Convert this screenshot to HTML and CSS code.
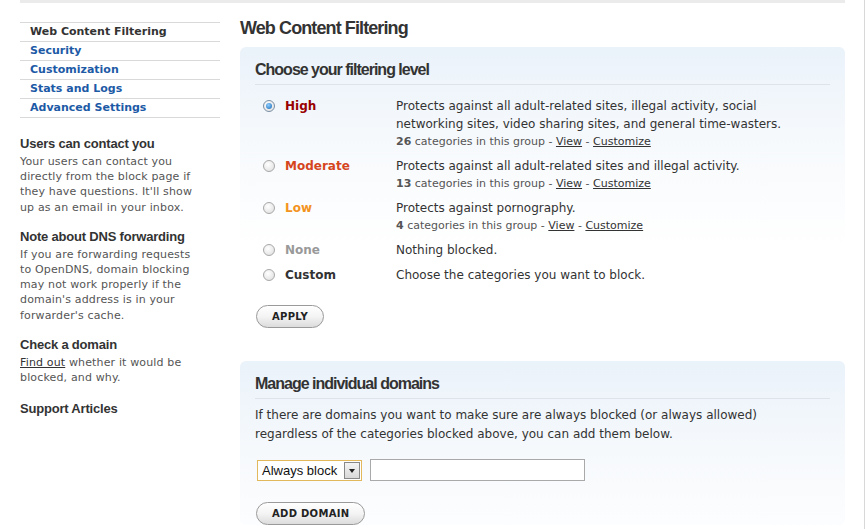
FILE: index.html
```html
<!DOCTYPE html>
<html lang="en">
  <head>
    <meta charset="UTF-8" />
    <title>Web Content Filtering</title>
    <link rel="stylesheet" href="styles.css">
  </head>
  <body>
    <div class="page">
      <div class="top-bar"></div>
      <div class="layout">
        <aside class="sidebar">
          <ul class="side-nav">
            <li class="current">Web Content Filtering</li>
            <li><a href="#">Security</a></li>
            <li><a href="#">Customization</a></li>
            <li><a href="#">Stats and Logs</a></li>
            <li><a href="#">Advanced Settings</a></li>
          </ul>

          <div class="side-block">
            <h3>Users can contact you</h3>
            <p>Your users can contact you directly from the block page if they have questions. It'll show up as an email in your inbox.</p>
          </div>
          <div class="side-block">
            <h3>Note about DNS forwarding</h3>
            <p>If you are forwarding requests to OpenDNS, domain blocking may not work properly if the domain's address is in your forwarder's cache.</p>
          </div>
          <div class="side-block">
            <h3>Check a domain</h3>
            <p><a href="#">Find out</a> whether it would be blocked, and why.</p>
          </div>
          <div class="side-block">
            <h3>Support Articles</h3>
          </div>
        </aside>

        <main class="main">
          <h1>Web Content Filtering</h1>

          <section class="panel">
            <h2>Choose your filtering level</h2>
            <div class="levels">
              <div class="level">
                <label class="level-name high"><span class="radio checked"></span>High</label>
                <div class="level-desc">
                  <p>Protects against all adult-related sites, illegal activity, social networking sites, video sharing sites, and general time-wasters.</p>
                  <p class="count"><b>26</b> categories in this group - <a href="#">View</a> - <a href="#">Customize</a></p>
                </div>
              </div>
              <div class="level">
                <label class="level-name moderate"><span class="radio"></span>Moderate</label>
                <div class="level-desc">
                  <p>Protects against all adult-related sites and illegal activity.</p>
                  <p class="count"><b>13</b> categories in this group - <a href="#">View</a> - <a href="#">Customize</a></p>
                </div>
              </div>
              <div class="level">
                <label class="level-name low"><span class="radio"></span>Low</label>
                <div class="level-desc">
                  <p>Protects against pornography.</p>
                  <p class="count"><b>4</b> categories in this group - <a href="#">View</a> - <a href="#">Customize</a></p>
                </div>
              </div>
              <div class="level">
                <label class="level-name none"><span class="radio"></span>None</label>
                <div class="level-desc">
                  <p>Nothing blocked.</p>
                </div>
              </div>
              <div class="level">
                <label class="level-name custom"><span class="radio"></span>Custom</label>
                <div class="level-desc">
                  <p>Choose the categories you want to block.</p>
                </div>
              </div>
            </div>
            <button class="pill">APPLY</button>
          </section>

          <section class="panel domains">
            <h2>Manage individual domains</h2>
            <p class="intro">If there are domains you want to make sure are always blocked (or always allowed) regardless of the categories blocked above, you can add them below.</p>
            <div class="domain-row">
              <div class="fake-select">Always block<span class="arrow"></span></div>
              <div class="fake-input"></div>
            </div>
            <button class="pill">ADD DOMAIN</button>
          </section>
        </main>
      </div>
    </div>
  </body>
</html>
```

FILE: styles.css
```css
* {
  box-sizing: border-box;
  margin: 0;
  padding: 0;
}

body {
  background: #fff;
  font-family: "DejaVu Sans", Verdana, sans-serif;
  color: #333;
}

.page {
  width: 865px;
  height: 529px;
  overflow: hidden;
  border-right: 1px solid #d8d8d8;
}

.top-bar {
  margin-left: 20px;
  width: 825px;
  height: 3px;
  background: #ebebeb;
}

.layout {
  display: flex;
  padding-left: 20px;
}

/* sidebar */
.sidebar {
  width: 200px;
  flex: none;
}

.side-nav {
  list-style: none;
  margin-top: 19px;
  border-bottom: 1px solid #d9d9d9;
}

.side-nav li {
  border-top: 1px solid #d9d9d9;
  height: 19px;
  line-height: 18px;
  padding-left: 10px;
  font-size: 11px;
  font-weight: bold;
  color: #333;
}

.side-nav a {
  color: #1d5aa6;
  text-decoration: none;
}

.side-block {
  margin-top: 18px;
}

.side-block + .side-block {
  margin-top: 14px;
}

.side-block:last-child {
  margin-top: 16px;
}

.side-block h3 {
  font-family: "Liberation Sans", Arial, sans-serif;
  font-size: 13px;
  letter-spacing: -0.2px;
  color: #333;
  line-height: 16px;
}

.side-block p {
  width: 184px;
  font-size: 11px;
  letter-spacing: 0.15px;
  line-height: 15.2px;
  color: #555;
  margin-top: 2px;
}

.side-block a {
  color: #333;
}

/* main */
.main {
  margin-left: 20px;
  width: 605px;
}

h1 {
  font-family: "Liberation Sans", Arial, sans-serif;
  font-size: 18px;
  letter-spacing: -0.9px;
  color: #333;
  line-height: 22px;
  margin-top: 14px;
  margin-bottom: 8px;
}

.panel {
  border-radius: 6px;
  background: linear-gradient(180deg, #eaf2fa 0px, #f6f9fc 90px, #fff 200px);
  padding: 13px 15px 0 15px;
}

.panel h2 {
  font-family: "Liberation Sans", Arial, sans-serif;
  font-size: 16px;
  letter-spacing: -1px;
  color: #333;
  line-height: 20px;
  padding-bottom: 4px;
  border-bottom: 1px solid #dde3ea;
}

.levels {
  margin-top: 12px;
}

.level {
  display: flex;
  margin-bottom: 6px;
}

.level:nth-child(4) {
  margin-bottom: 7px;
}

.level-name {
  width: 141px;
  flex: none;
  display: flex;
  align-items: center;
  height: 18px;
  font-size: 12px;
  font-weight: bold;
}

.level-name.high { color: #990000; }
.level-name.moderate { color: #d6461d; }
.level-name.low { color: #f39422; }
.level-name.none { color: #999; }
.level-name.custom { color: #333; }

.radio {
  width: 12px;
  height: 12px;
  border-radius: 50%;
  border: 1px solid #a8a8a8;
  background: radial-gradient(circle at 40% 35%, #fff, #dcdcdc);
  margin-left: 8px;
  margin-right: 10px;
  position: relative;
}

.radio.checked {
  border-color: #7a8fa5;
}

.radio.checked::after {
  content: "";
  position: absolute;
  left: 2px;
  top: 2px;
  width: 6px;
  height: 6px;
  border-radius: 50%;
  background: radial-gradient(circle at 40% 35%, #8fd0ff, #1565b5);
}

.level-desc {
  width: 420px;
}

.level-desc p {
  font-size: 12px;
  line-height: 18px;
  color: #333;
}

.level-desc .count {
  font-size: 11px;
  color: #555;
  line-height: 18px;
}

.level-desc .count a {
  color: #333;
}

.pill {
  display: block;
  font-family: "DejaVu Sans", Verdana, sans-serif;
  font-size: 10px;
  font-weight: bold;
  letter-spacing: 0.3px;
  color: #222;
  border: 1px solid #9a9a9a;
  border-radius: 12px;
  background: linear-gradient(180deg, #fff 0%, #f4f4f4 50%, #dcdcdc 100%);
  height: 23px;
  padding: 0 15px;
  margin-top: 21px;
  margin-left: 1px;
}

.panel.domains {
  margin-top: 33px;
}

.intro {
  width: 545px;
  font-size: 12px;
  line-height: 19px;
  color: #333;
  margin-top: 7px;
}

.domain-row {
  display: flex;
  align-items: center;
  gap: 8px;
  margin-top: 15px;
  margin-left: 2px;
}

.fake-select {
  display: flex;
  align-items: center;
  justify-content: space-between;
  width: 105px;
  height: 21px;
  border: 1px solid #e2b85c;
  background: #fff;
  font-family: "Liberation Sans", Arial, sans-serif;
  font-size: 13px;
  color: #111;
  padding-left: 4px;
  padding-right: 1px;
}

.arrow {
  width: 16px;
  height: 17px;
  border: 1px solid #888;
  background: linear-gradient(180deg, #f4f4f4, #d8d8d8);
  position: relative;
}

.arrow::after {
  content: "";
  position: absolute;
  left: 4px;
  top: 6px;
  border-left: 3.5px solid transparent;
  border-right: 3.5px solid transparent;
  border-top: 4px solid #222;
}

.fake-input {
  width: 215px;
  height: 22px;
  border: 1px solid #a9a9a9;
  background: #fff;
}

.domains .pill {
  margin-top: 21px;
}
```
